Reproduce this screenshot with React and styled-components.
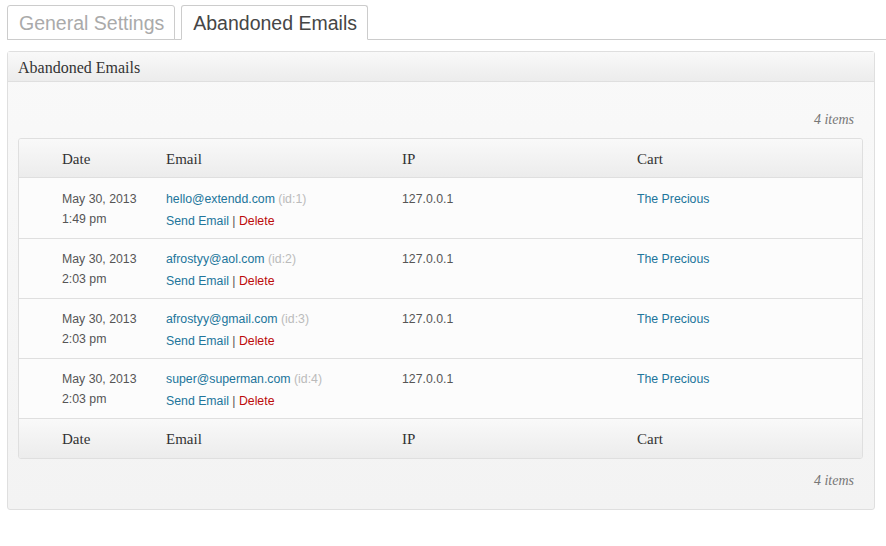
import React from "react";
import styled, { createGlobalStyle } from "styled-components";

const GlobalStyle = createGlobalStyle`
  body {
    margin: 0;
    background: #fff;
    font-family: "Liberation Sans", Arial, sans-serif;
    color: #333;
  }
`;

const Page = styled.div`
  padding: 5px 11px 0 7px;
`;

const TabBar = styled.div`
  display: flex;
  gap: 6px;
  border-bottom: 1px solid #ccc;
  margin-right: -11px;
  height: 35px;
  box-sizing: border-box;
`;

const Tab = styled.div`
  padding: 4px 10px 0 11px;
  height: 35px;
  box-sizing: border-box;
  border: 1px solid #ccc;
  border-bottom: ${(p) => (p.$active ? "1px solid #fff" : "1px solid #ccc")};
  border-radius: 3px 3px 0 0;
  background: #fff;
  font-size: 19.5px;
  line-height: 26px;
  color: ${(p) => (p.$active ? "#464646" : "#aaa")};
`;

const Panel = styled.div`
  margin-top: 11px;
  border: 1px solid #dfdfdf;
  border-radius: 3px;
  background: linear-gradient(#f9f9f9, #f3f3f3);
  height: 459px;
  box-sizing: border-box;
`;

const PanelHeader = styled.div`
  height: 29px;
  border-bottom: 1px solid #dfdfdf;
  background: linear-gradient(#f9f9f9, #ececec);
  padding-left: 10px;
  font-family: "Liberation Serif", "Times New Roman", serif;
  font-size: 16px;
  line-height: 31px;
  color: #333;
`;

const PanelBody = styled.div`
  padding: 0 11px 0 10px;
`;

const Count = styled.div`
  height: ${(p) => p.$h}px;
  padding-bottom: ${(p) => p.$pb}px;
  box-sizing: border-box;
  display: flex;
  align-items: ${(p) => p.$align};
  justify-content: flex-end;
  padding-right: 9px;
  font-family: "Liberation Serif", "Times New Roman", serif;
  font-style: italic;
  font-size: 14px;
  color: #777;
`;

const Table = styled.div`
  border: 1px solid #dfdfdf;
  border-radius: 3px;
  background: #f9f9f9;
  overflow: hidden;
`;

const Row = styled.div`
  display: grid;
  grid-template-columns: 33px 104px 236px 235px 1fr;
  box-sizing: border-box;
`;

const HeadRow = styled(Row)`
  height: ${(p) => (p.$foot ? 40 : 39)}px;
  background: linear-gradient(#f9f9f9, #ececec);
  border-top: ${(p) => (p.$foot ? "1px solid #dfdfdf" : "none")};
  border-bottom: ${(p) => (p.$foot ? "none" : "1px solid #dfdfdf")};
  align-items: center;
  padding-top: 2px;
  font-family: "Liberation Serif", "Times New Roman", serif;
  font-size: 15px;
  color: #333;
`;

const BodyRow = styled(Row)`
  height: 60px;
  background: #fcfcfc;
  border-top: ${(p) => (p.$first ? "none" : "1px solid #dfdfdf")};
  padding-top: ${(p) => (p.$first ? 11 : 10)}px;
  font-size: 12.3px;
  line-height: 20px;
  color: #555;
`;

const Cell = styled.div`
  padding-left: 10px;
`;

const Link = styled.a`
  color: ${(p) => (p.$danger ? "#bc0b0b" : "#21759b")};
  text-decoration: none;
`;

const Muted = styled.span`
  color: #bbb;
`;

const Actions = styled.div`
  margin-top: 2px;
  color: #555;
`;

const rows = [
  { date: "May 30, 2013", time: "1:49 pm", email: "hello@extendd.com", id: 1 },
  { date: "May 30, 2013", time: "2:03 pm", email: "afrostyy@aol.com", id: 2 },
  { date: "May 30, 2013", time: "2:03 pm", email: "afrostyy@gmail.com", id: 3 },
  { date: "May 30, 2013", time: "2:03 pm", email: "super@superman.com", id: 4 },
];

const Headings = ({ foot }) => (
  <HeadRow $foot={foot}>
    <span />
    <Cell>Date</Cell>
    <Cell>Email</Cell>
    <Cell>IP</Cell>
    <Cell>Cart</Cell>
  </HeadRow>
);

const App = () => {
  return (
    <Page>
      <GlobalStyle />
      <TabBar>
        <Tab>General Settings</Tab>
        <Tab $active>Abandoned Emails</Tab>
      </TabBar>
      <Panel>
        <PanelHeader>Abandoned Emails</PanelHeader>
        <PanelBody>
          <Count $h={56} $pb={10} $align="flex-end">4 items</Count>
          <Table>
            <Headings />
            {rows.map((r, i) => (
              <BodyRow key={r.id} $first={i === 0}>
                <span />
                <Cell>
                  {r.date}
                  <br />
                  {r.time}
                </Cell>
                <Cell>
                  <Link href="#">{r.email}</Link> <Muted>(id:{r.id})</Muted>
                  <Actions>
                    <Link href="#">Send Email</Link> | <Link href="#" $danger>Delete</Link>
                  </Actions>
                </Cell>
                <Cell>127.0.0.1</Cell>
                <Cell>
                  <Link href="#">The Precious</Link>
                </Cell>
              </BodyRow>
            ))}
            <Headings foot />
          </Table>
          <Count $h={44} $pb={0} $align="center">4 items</Count>
        </PanelBody>
      </Panel>
    </Page>
  );
};

export default App;
